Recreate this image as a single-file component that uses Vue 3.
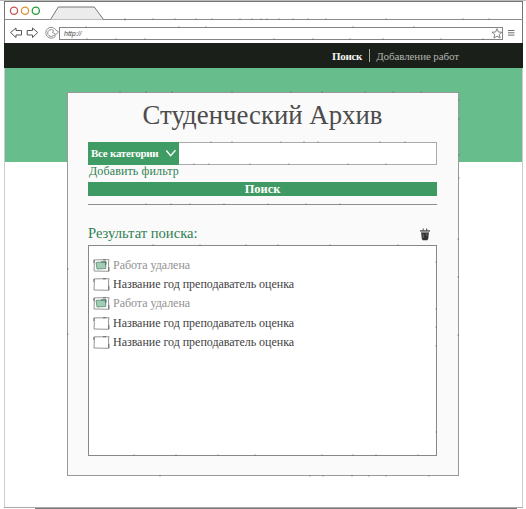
<script setup>
const rows = [
  { text: 'Работа удалена', removed: true, h: 20 },
  { text: 'Название год преподаватель оценка', removed: false, h: 19 },
  { text: 'Работа удалена', removed: true, h: 19 },
  { text: 'Название год преподаватель оценка', removed: false, h: 21 },
  { text: 'Название год преподаватель оценка', removed: false, h: 16 },
]
const ticks = [
  'M125 18v3M153 18v2M175 18v2M196 18v2M212 18v2M240 18v2M252 18v2M261 18v2M267 18v2M279 18v2M293 18v2M308 18v2M326 18v2M386 18v2M463 18v2M489 18v2',
  'M86 26v2M179 26v2M206 26v2M353 26v2M414 26v2M87 38v2M116 38v2M145 38v2M274 38v2M313 38v2M350 38v2M383 38v2M441 38v2M483 38v2',
  'M120 91v2M146 91v2M172 91v2M232 91v2M291 91v2M322 91v2M365 91v2M393 91v2M421 91v2M67 269h2M67 334h2M458 100h2M458 119h2M458 155h2M458 178h2M457 239h2M457 277h2M457 335h2',
  'M211 141v2M232 141v2M281 141v2M304 141v2M318 141v2M380 141v2M405 141v2M194 163v2M209 163v2M250 163v2M289 163v2M348 163v2M386 163v2',
  'M146 203v2M171 203v2M190 203v2M224 203v2M268 203v2M306 203v2M340 203v2M153 244v2M200 244v2M246 244v2M278 244v2M330 244v2M398 244v2',
  'M435 262h2M435 309h2M435 327h2M435 346h2M435 432h2M134 454v2M176 454v2M218 454v2M255 454v2M322 454v2M353 454v2M376 454v2M418 454v2',
  'M160 475v2M310 475v2M323 475v2M352 475v2M369 475v2M386 475v2M429 475v2',
]
</script>

<template>
  <div class="screen">
    <div class="window">
      <header class="tabs">
        <svg width="110" height="18" viewBox="0 0 110 18">
          <circle cx="8" cy="8.700" r="3.6" fill="none" stroke="#c4504f" stroke-width="1.3" />
          <circle cx="19" cy="8.700" r="3.6" fill="none" stroke="#dc9035" stroke-width="1.3" />
          <circle cx="29.8" cy="8.700" r="3.6" fill="none" stroke="#209c34" stroke-width="1.3" />
          <path d="M44.5 17.5 52.3 5h36L97.500 17.500z" fill="#ececec" />
          <path d="M44.500 17.500 52.300 5h36L97.500 17.500" fill="none" stroke="#777" stroke-width="1" />
        </svg>
      </header>
      <div class="toolbar">
        <svg class="nav-icons" width="54" height="22" viewBox="0 0 54 22">
          <g fill="none" stroke="#555" stroke-width="1">
            <path d="M5.500 12.500 11 8v2.500h5.500V15H11v2.600z" />
            <path d="M32.700 12.500 27.500 8v2.500H22.200V15h5.300v2.600z" />
            <path d="M50.800 10A5.400 5.400 0 1 0 50.500 16l-1.500-1.200A3.400 3.400 0 1 1 48.800 11l-1.500 1.300 3.600 2.200 2.600-2.500-2.700-2z" stroke="#808080" stroke-width=".9" />
          </g>
        </svg>
        <div class="address">
          <span class="url">http://</span>
          <svg width="12" height="12" viewBox="0 0 12 12">
            <path d="M6 .7 7.400 4l3.500.2-2.700 2.300.9 3.600L6 8.200 2.900 10.100l.9-3.600L1.100 4.200l3.500-.2z" fill="#fff" stroke="#777" stroke-width=".9" />
          </svg>
        </div>
        <svg width="8" height="22" viewBox="0 0 8 22">
          <path d="M0 10.500h6.500M0 12.800h6.500M0 15.100h6.500" stroke="#606060" stroke-width=".9" />
        </svg>
      </div>

      <nav class="menu">
        <b>Поиск</b><i></i><span>Добавление работ</span>
      </nav>

      <main class="page">
        <section class="card">
          <h1>Студенческий Архив</h1>
          <div class="search">
            <div class="category">
              <span>Все категории</span>
              <svg width="12" height="9" viewBox="0 0 12 9">
                <path d="M1.300 1.500 5.600 6.700 10.500 1.300" fill="none" stroke="#fff" stroke-width="1.300" />
              </svg>
            </div>
            <div class="field"></div>
          </div>
          <div class="filter"><span>Добавить фильтр</span></div>
          <div class="submit"><span>Поиск</span></div>
          <div class="rule"></div>
          <div class="result-head">
            <h2>Результат поиска:</h2>
            <svg width="10" height="13" viewBox="0 0 10 13">
              <path d="M0 2.300h10v1.200H0z" fill="#3b3b3b" />
              <path d="M1 3.500h8v1.500H1z" fill="#888" />
              <path d="M3.200 2.500V.5M6.600 2.500V.5" stroke="#444" stroke-width="1" />
              <path d="M1.200 5h7.600l-.6 6-1 1.300H2.800L1.800 11z" fill="#333" />
              <path d="M3.200 6v4M6.700 5.500V8" stroke="#909090" stroke-width=".6" />
            </svg>
          </div>
          <div class="results">
            <div
              v-for="(row, i) in rows"
              :key="i"
              class="row"
              :class="{ removed: row.removed }"
              :style="{ height: row.h + 'px' }"
            >
              <svg width="17" height="13" viewBox="0 0 17 13">
                <path d="M1 .9 16 .7 15.500 4 15.900 12.300 1 12 1.300 6z" fill="#fff" stroke="#888" stroke-width=".9" />
                <path d="M1 1v3M15.800 8v4M10 .8h3" stroke="#555" stroke-width=".8" />
                <path v-if="row.removed" d="M3 3.500 13 2.700 12.700 9.500 4 10z" fill="#a3ccb6" stroke="#568a70" stroke-width=".8" />
                <path v-if="row.removed" d="M8 3h5l-.5 3" fill="none" stroke="#355c48" stroke-width=".8" />
              </svg>
              <span>{{ row.text }}</span>
            </div>
          </div>
        </section>
      </main>
    </div>
    <div class="shadow"></div>
    <svg class="ticks" width="526" height="509" viewBox="0 0 526 509">
      <path v-for="(d, i) in ticks" :key="i" :d="d" fill="none" stroke="#555" stroke-opacity=".5" stroke-width=".8" />
    </svg>
  </div>
</template>

<style>
body {
  overflow: hidden;
}
</style>

<style scoped>
* {
  box-sizing: border-box;
}
svg {
  display: block;
  flex: none;
}
.screen {
  position: relative;
  width: 526px;
  height: 509px;
  padding: 1px 3px 0 4px;
  background: linear-gradient(#bbb 0 1px, #fff 1px);
  font-family: "Liberation Serif", serif;
  white-space: nowrap;
}
.window {
  display: flex;
  flex-direction: column;
  width: 519px;
  height: 507px;
  border-bottom: 1px solid #aaa;
  background: linear-gradient(#ccc, #ccc) 0 0 / 1px 100% no-repeat,
    linear-gradient(#ccc, #ccc) 518px 0 / 1px 100% no-repeat, #fff;
}
.tabs {
  height: 19px;
  border: 1px solid #757575;
  border-bottom-color: #8d8d8d;
  padding-left: 1px;
}
.toolbar {
  display: flex;
  height: 23px;
  border: solid #757575;
  border-width: 0 1px;
}
.address {
  display: flex;
  align-items: center;
  justify-content: space-between;
  width: 444px;
  height: 13px;
  margin: 7px 5px 0 0;
  border: 1px solid #848484;
}
.address svg {
  margin-right: -1px;
}
.url {
  padding-left: 4px;
  font: italic 7px "Liberation Sans", sans-serif;
  color: #444;
}
.menu {
  display: flex;
  align-items: center;
  justify-content: flex-end;
  height: 25px;
  padding-right: 64px;
  background: #1a2019;
  color: #b0b3af;
  font-size: 11px;
  letter-spacing: -0.1px;
}
.menu b {
  color: #f2f2f2;
  letter-spacing: -0.3px;
}
.menu i {
  width: 1px;
  height: 13px;
  margin: 0 6px 0 7px;
  background: #a5a8a5;
}
.page {
  flex: 1;
  margin: 0 1px;
  padding: 24px 0 0 62px;
  background: linear-gradient(#67bd8b 0 94px, #fff 94px);
}
.card {
  width: 392px;
  height: 384px;
  padding: 0 21px 0 20px;
  border: 1px solid #999;
  background: #fafafa;
}
h1 {
  height: 49px;
  margin: 0;
  font-size: 26.8px;
  font-weight: 400;
  line-height: 45px;
  text-align: center;
  color: #4c4c4c;
}
.search {
  display: flex;
  width: 349px;
  height: 23px;
}
.category {
  display: flex;
  align-items: center;
  justify-content: space-between;
  width: 91px;
  padding: 0 2px 1px 3px;
  background: #3f9c64;
  color: #fff;
  font-size: 11px;
  font-weight: 700;
  letter-spacing: -0.25px;
}
.field {
  flex: 1;
  border: 1px solid #aaa;
  border-left: 0;
  background: #fff;
}
.filter {
  height: 17px;
  padding-left: 1px;
  line-height: 13px;
  font-size: 12px;
  letter-spacing: 0.13px;
  color: #2f8052;
}
.submit {
  width: 349px;
  height: 14px;
  background: #3e9962;
  color: #fff;
  font-size: 12.4px;
  font-weight: 700;
  line-height: 14px;
  text-align: center;
}
.rule {
  width: 349px;
  height: 9px;
  border-bottom: 1px solid #8e8e8e;
}
.result-head {
  display: flex;
  align-items: center;
  justify-content: space-between;
  height: 40px;
  padding: 19px 7px 0 0;
}
h2 {
  margin: 0;
  padding-bottom: 3px;
  font-size: 14.6px;
  font-weight: 400;
  line-height: 18px;
  color: #2f8052;
}
.results {
  width: 349px;
  height: 211px;
  padding: 9px 4px;
  border: 1px solid #888;
  background: #fff;
}
.row {
  display: flex;
  align-items: center;
  gap: 3px;
  font-size: 12px;
  letter-spacing: -0.03px;
  color: #3f3f3f;
}
.removed {
  color: #929292;
}
.shadow {
  width: 482px;
  height: 1px;
  margin-left: 31px;
  background: #777;
}
.ticks {
  position: absolute;
  left: 0;
  top: 0;
}
</style>
